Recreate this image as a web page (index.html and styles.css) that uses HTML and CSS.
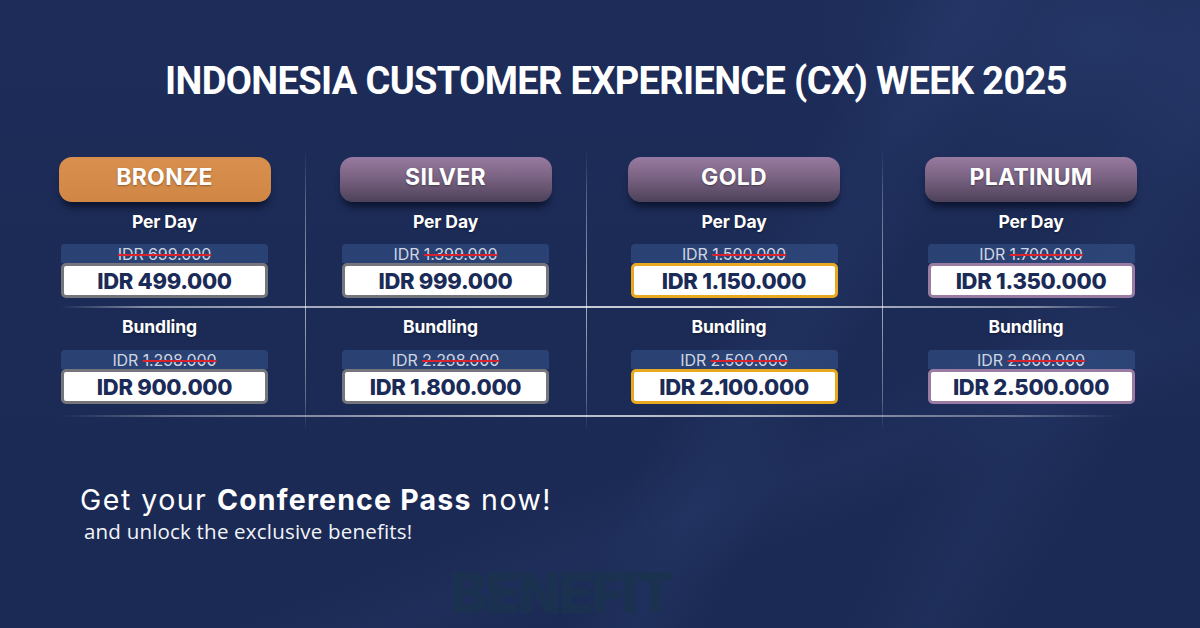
FILE: index.html
```html
<!DOCTYPE html>
<html lang="en">
<head>
<meta charset="utf-8">
<title>Indonesia Customer Experience (CX) Week 2025</title>
<link rel="stylesheet" href="styles.css">
</head>
<body>
<main class="page">
  <h1 class="title">INDONESIA CUSTOMER EXPERIENCE (CX) WEEK 2025</h1>

  <section class="pricing">
    <div class="pill pill-bronze">BRONZE</div>
    <div class="pill pill-purple">SILVER</div>
    <div class="pill pill-purple">GOLD</div>
    <div class="pill pill-purple">PLATINUM</div>

    <div class="label">Per Day</div>
    <div class="label">Per Day</div>
    <div class="label">Per Day</div>
    <div class="label">Per Day</div>

    <div class="price">
      <div class="old"><s>IDR 699.000</s></div>
      <div class="new new-grey">IDR 499.000</div>
    </div>
    <div class="price">
      <div class="old">IDR <s>1.399.000</s></div>
      <div class="new new-grey">IDR 999.000</div>
    </div>
    <div class="price">
      <div class="old">IDR <s>1.500.000</s></div>
      <div class="new new-gold">IDR 1.150.000</div>
    </div>
    <div class="price">
      <div class="old">IDR <s>1.700.000</s></div>
      <div class="new new-plat">IDR 1.350.000</div>
    </div>

    <div class="rule rule-mid"></div>

    <div class="label label-b">Bundling</div>
    <div class="label label-b">Bundling</div>
    <div class="label label-b">Bundling</div>
    <div class="label label-b">Bundling</div>

    <div class="price price-b">
      <div class="old">IDR <s>1.298.000</s></div>
      <div class="new new-grey">IDR 900.000</div>
    </div>
    <div class="price price-b">
      <div class="old">IDR <s>2.298.000</s></div>
      <div class="new new-grey">IDR 1.800.000</div>
    </div>
    <div class="price price-b">
      <div class="old">IDR <s>2.500.000</s></div>
      <div class="new new-gold">IDR 2.100.000</div>
    </div>
    <div class="price price-b">
      <div class="old">IDR <s>2.900.000</s></div>
      <div class="new new-plat">IDR 2.500.000</div>
    </div>

    <div class="rule rule-bottom"></div>
  </section>

  <section class="cta">
    <p class="cta-main">Get your <strong>Conference Pass</strong> now!</p>
    <p class="cta-sub">and unlock the exclusive benefits!</p>
  </section>

  <div class="ghost">BENEFIT</div>
</main>
</body>
</html>
```

FILE: styles.css
```css
* { box-sizing: border-box; }

html, body {
  margin: 0;
  padding: 0;
  width: 1200px;
  height: 628px;
  overflow: hidden;
}

body {
  background-color: #1c2b56;
  background-image:
    radial-gradient(ellipse 420px 240px at 1100px 40px, rgba(55, 80, 140, 0.28), transparent 70%),
    linear-gradient(118deg, transparent 0%, transparent 58%, rgba(70, 95, 160, 0.10) 63%, transparent 68%, transparent 76%, rgba(70, 95, 160, 0.08) 82%, transparent 88%),
    linear-gradient(160deg, transparent 0%, transparent 66%, rgba(70, 95, 160, 0.07) 72%, transparent 78%),
    linear-gradient(180deg, #1d2c58 0%, #1b2a54 100%);
  font-family: "Inter", "Noto Sans", sans-serif;
  color: #ffffff;
}

.page {
  display: flex;
  flex-direction: column;
  height: 628px;
}

.title {
  margin: 58px 0 0 0;
  padding-left: 32px;
  text-align: center;
  font-family: "Roboto", "Liberation Sans", sans-serif;
  font-weight: 700;
  font-size: 38px;
  line-height: 46px;
  letter-spacing: -0.65px;
  color: #ffffff;
}

/* ---------- pricing grid ---------- */
.pricing {
  margin: 45px 0 0 24px;
  width: 1156px;
  padding: 8px 0 14px 0;
  display: grid;
  grid-template-columns: 281px 281px 296px 298px;
  justify-items: center;
  background-image:
    linear-gradient(180deg, rgba(255,255,255,0) 0%, rgba(255,255,255,0.3) 20%, rgba(255,255,255,0.6) 55%, rgba(255,255,255,0.3) 88%, rgba(255,255,255,0) 100%),
    linear-gradient(180deg, rgba(255,255,255,0) 0%, rgba(255,255,255,0.3) 20%, rgba(255,255,255,0.6) 55%, rgba(255,255,255,0.3) 88%, rgba(255,255,255,0) 100%),
    linear-gradient(180deg, rgba(255,255,255,0) 0%, rgba(255,255,255,0.3) 20%, rgba(255,255,255,0.6) 55%, rgba(255,255,255,0.3) 88%, rgba(255,255,255,0) 100%);
  background-size: 1px 100%, 1px 100%, 1px 100%;
  background-position: 281px 0, 562px 0, 858px 0;
  background-repeat: no-repeat;
}

.pill {
  width: 212px;
  height: 45px;
  padding-bottom: 5px;
  border-radius: 13px;
  display: flex;
  align-items: center;
  justify-content: center;
  font-family: "Inter", "Noto Sans", sans-serif;
  font-weight: 700;
  font-size: 23px;
  letter-spacing: 0.3px;
  color: #ffffff;
  text-shadow: 0 1px 2px rgba(0,0,0,0.35);
  box-shadow: 0 8px 7px -3px rgba(8, 14, 35, 0.8);
}

.pill-bronze {
  background: linear-gradient(180deg, #d98f4d 0%, #d08746 100%);
}

.pill-purple {
  background: linear-gradient(180deg, #987aa0 0%, #7a6383 45%, #4d4159 100%);
}

.label {
  margin-top: 9px;
  font-weight: 700;
  font-size: 17.5px;
  line-height: 22px;
  letter-spacing: -0.1px;
  color: #ffffff;
  text-shadow: 0 1px 2px rgba(0,0,0,0.4);
}

.label-b {
  margin-top: 8px;
  margin-right: 10px;
}

.price {
  margin-top: 11px;
  width: 207px;
  display: flex;
  flex-direction: column;
}

.price-b {
  margin-top: 12px;
}

.old {
  height: 19px;
  border-radius: 4px 4px 0 0;
  background: rgba(55, 85, 140, 0.55);
  text-align: center;
  font-size: 16px;
  line-height: 21px;
  font-weight: 400;
  color: #cfd5e2;
  letter-spacing: -0.1px;
}

.old s {
  text-decoration-color: #d8232f;
  text-decoration-thickness: 2px;
}

.new {
  height: 35px;
  border-radius: 5px;
  border: 3px solid #75777d;
  background: #ffffff;
  display: flex;
  align-items: center;
  justify-content: center;
  font-weight: 800;
  font-size: 22px;
  letter-spacing: -0.3px;
  color: #1b2b57;
}

.new-grey { border-color: #74767c; }
.new-gold { border-color: #e8a81f; }
.new-plat { border-color: #9a7ca2; }

.rule {
  grid-column: 1 / -1;
  justify-self: stretch;
  height: 2px;
  margin-left: 36px;
  margin-right: 60px;
}

.rule-mid {
  margin-top: 8px;
  background: linear-gradient(90deg, rgba(255,255,255,0) 0%, rgba(255,255,255,0.45) 8%, rgba(255,255,255,0.75) 40%, rgba(255,255,255,0.75) 60%, rgba(255,255,255,0.45) 92%, rgba(255,255,255,0) 100%);
}

.rule-bottom {
  margin-top: 11px;
  background: linear-gradient(90deg, rgba(255,255,255,0) 0%, rgba(255,255,255,0.3) 10%, rgba(255,255,255,0.7) 45%, rgba(255,255,255,0.7) 55%, rgba(255,255,255,0.3) 90%, rgba(255,255,255,0) 100%);
}

/* ---------- CTA ---------- */
.cta {
  margin-top: 52px;
  padding-left: 80px;
}

.cta p { margin: 0; }

.cta-main {
  font-family: "Inter", "Noto Sans", sans-serif;
  font-size: 28.5px;
  line-height: 34px;
  font-weight: 400;
  letter-spacing: 1.5px;
  color: #ffffff;
}

.cta-main strong { font-weight: 700; letter-spacing: 1.2px; }

.cta-sub {
  margin-top: 1px !important;
  padding-left: 4px;
  font-family: "Open Sans", "Noto Sans", sans-serif;
  font-size: 20.5px;
  line-height: 26px;
  letter-spacing: 0.2px;
  color: #f2f4f8;
}

.ghost {
  margin-top: 25px;
  padding-left: 450px;
  font-family: "Inter", "Noto Sans", sans-serif;
  font-weight: 900;
  font-size: 56px;
  line-height: 48px;
  letter-spacing: -2px;
  color: #1a3250;
}
```
